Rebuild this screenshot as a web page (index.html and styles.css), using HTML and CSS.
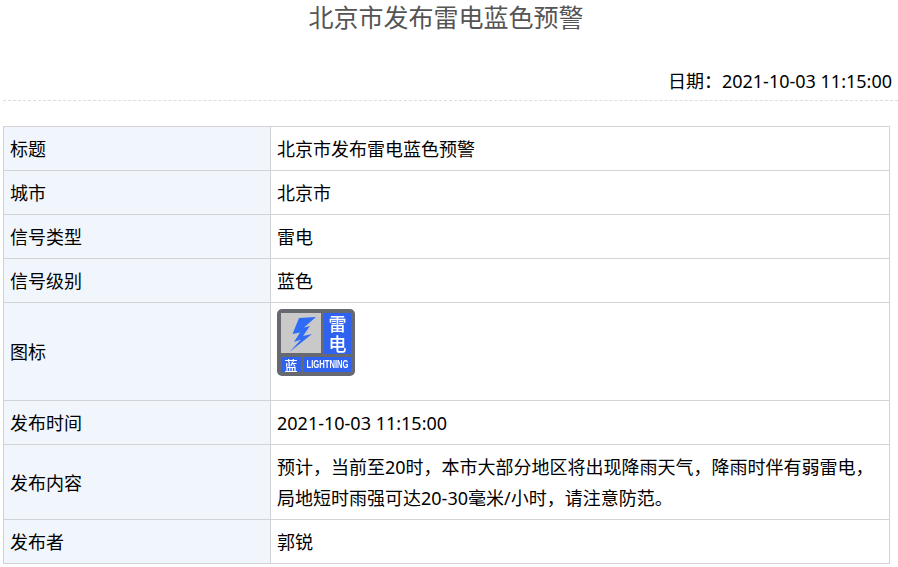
FILE: index.html
```html
<!DOCTYPE html>
<html lang="zh-CN">
<head>
<meta charset="utf-8">
<title>北京市发布雷电蓝色预警</title>
<link rel="stylesheet" href="styles.css">
</head>
<body>
<h1 class="title">北京市发布雷电蓝色预警</h1>
<div class="date">日期：2021-10-03 11:15:00</div>
<table class="info">
<tr><th>标题</th><td>北京市发布雷电蓝色预警</td></tr>
<tr><th>城市</th><td>北京市</td></tr>
<tr><th>信号类型</th><td>雷电</td></tr>
<tr><th>信号级别</th><td>蓝色</td></tr>
<tr><th>图标</th><td class="icon-cell">
<svg class="signal" width="78" height="67" viewBox="0 0 78 67">
<rect x="0" y="0" width="78" height="67" rx="5" fill="#666a70"/>
<rect x="4" y="4" width="40" height="40" fill="#c9c9c9"/>
<rect x="47" y="4" width="27" height="41" fill="#2f62ee"/>
<rect x="4" y="48" width="20" height="15" fill="#2f62ee"/>
<rect x="27" y="48" width="47" height="15" fill="#2f62ee"/>
<path d="M39 8 L22 9 L15.500 25 L23 23.500 L17 33 L24 30.500 L12.500 43 L35 25 L26 27 L33 17 L27 18.500 Z" fill="#2f6cf5"/>
<text class="glyph" x="60.500" y="22" text-anchor="middle" font-size="18">雷</text>
<text class="glyph" x="60.500" y="41.500" text-anchor="middle" font-size="18">电</text>
<text class="glyph" x="14" y="60.500" text-anchor="middle" font-size="13">蓝</text>
<text class="latin" x="50.500" y="59" text-anchor="middle" font-size="10" textLength="42" lengthAdjust="spacingAndGlyphs">LIGHTNING</text>
</svg>
</td></tr>
<tr><th>发布时间</th><td>2021-10-03 11:15:00</td></tr>
<tr><th>发布内容</th><td>预计，当前至20时，本市大部分地区将出现降雨天气，降雨时伴有弱雷电，<br>局地短时雨强可达20-30毫米/小时，请注意防范。</td></tr>
<tr><th>发布者</th><td>郭锐</td></tr>
</table>
</body>
</html>
```
FILE: styles.css
```css
html, body {
  margin: 0;
  padding: 0;
  background: #fff;
}
body {
  font-family: "Noto Sans", "Noto Sans CJK SC", sans-serif;
  color: #000;
  height: 567px;
  overflow: hidden;
}
.title {
  margin: 0;
  height: 36px;
  line-height: 34px;
  font-size: 25px;
  font-weight: 400;
  color: #555;
  text-align: center;
  padding-right: 6px;
}
.date {
  margin: 30px 0 0 3px;
  padding: 0 6px 14px 0;
  height: 20px;
  line-height: 30px;
  font-size: 18px;
  text-align: right;
  border-bottom: 1px dashed #ddd;
}
.info {
  margin: 25px 0 0 3px;
  width: 887px;
  border-collapse: collapse;
  table-layout: fixed;
  font-size: 18px;
  line-height: 31px;
}
.info th, .info td {
  border: 1px solid #d3d3d6;
  padding: 7px 6px 5px;
  text-align: left;
  font-weight: 400;
  vertical-align: middle;
}
.info th {
  width: 254px;
  background: #f1f6fd;
}
.info .icon-cell {
  height: 85px;
  padding-top: 6px;
  padding-bottom: 6px;
  vertical-align: top;
}
.signal {
  display: block;
  filter: blur(0.4px);
}
.glyph {
  font-family: "Noto Sans CJK SC", sans-serif;
  font-weight: 500;
  fill: #fff;
}
.latin {
  font-family: "Liberation Sans", sans-serif;
  font-weight: 700;
  fill: #fff;
}
```
